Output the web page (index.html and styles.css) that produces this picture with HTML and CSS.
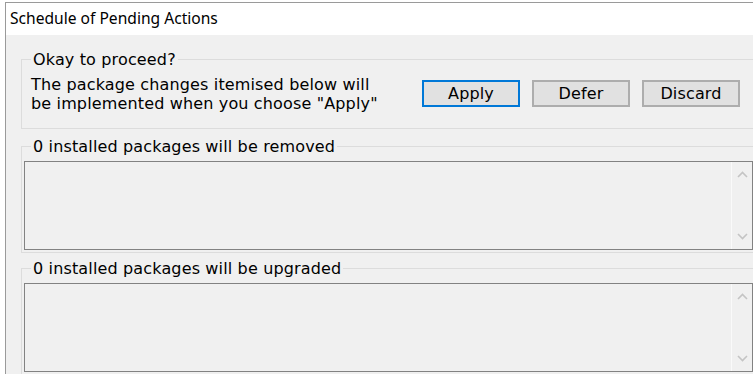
FILE: index.html
```html
<!DOCTYPE html>
<html>
<head>
<meta charset="utf-8">
<link rel="stylesheet" href="styles.css">
</head>
<body>
<div class="desk">
  <div class="window">
    <div class="titlebar">Schedule of Pending Actions</div>
    <div class="client">
      <fieldset class="group group-confirm">
        <legend>Okay to proceed?</legend>
        <div class="confirm-row">
          <p class="confirm-text">The package changes itemised below will<br>be implemented when you choose "Apply"</p>
          <div class="buttons">
            <button class="btn btn-default">Apply</button>
            <button class="btn">Defer</button>
            <button class="btn">Discard</button>
          </div>
        </div>
      </fieldset>
      <fieldset class="group group-list">
        <legend>0 installed packages will be removed</legend>
        <div class="listbox">
          <div class="list-body"></div>
          <div class="vscroll">
            <svg class="arrow" width="11" height="7" viewBox="0 0 11 7"><path d="M1 6 L5.5 1.5 L10 6" fill="none" stroke="#c4c4c4" stroke-width="1.6"/></svg>
            <svg class="arrow" width="11" height="7" viewBox="0 0 11 7"><path d="M1 1 L5.5 5.5 L10 1" fill="none" stroke="#c4c4c4" stroke-width="1.6"/></svg>
          </div>
        </div>
      </fieldset>
      <fieldset class="group group-list group-last">
        <legend>0 installed packages will be upgraded</legend>
        <div class="listbox">
          <div class="list-body"></div>
          <div class="vscroll">
            <svg class="arrow" width="11" height="7" viewBox="0 0 11 7"><path d="M1 6 L5.5 1.5 L10 6" fill="none" stroke="#c4c4c4" stroke-width="1.6"/></svg>
            <svg class="arrow" width="11" height="7" viewBox="0 0 11 7"><path d="M1 1 L5.5 5.5 L10 1" fill="none" stroke="#c4c4c4" stroke-width="1.6"/></svg>
          </div>
        </div>
      </fieldset>
    </div>
  </div>
</div>
</body>
</html>
```
FILE: styles.css
```css
html, body {
  margin: 0;
  padding: 0;
  background: #ffffff;
  overflow: hidden;
  width: 753px;
  height: 374px;
}

.desk {
  padding: 2px 0 0 5px;
}

.window {
  width: 780px;
  border-left: 1px solid #9a9a9a;
  border-top: 1px solid #9a9a9a;
  background: #f0f0f0;
}

.titlebar {
  height: 32px;
  background: #ffffff;
  font-family: "Noto Sans", sans-serif;
  font-size: 15.6px;
  line-height: 31px;
  padding-left: 4px;
  color: #000;
}

.client {
  padding: 15px 0 10px 15px;
  font-family: "DejaVu Sans", sans-serif;
  font-size: 16px;
  letter-spacing: 0.15px;
  color: #000;
}

.group {
  margin: 0;
  width: 735px;
  border: 1px solid #dcdcdc;
  padding: 0;
  min-width: 0;
}

.group legend {
  margin-left: 9px;
  padding: 0 2px;
  line-height: 19px;
  height: 19px;
}

.confirm-row {
  display: flex;
  align-items: flex-start;
  padding: 6px 0 15px 9px;
}

.confirm-text {
  margin: 0;
  line-height: 19px;
  width: 391px;
}

.buttons {
  display: flex;
  gap: 12px;
  margin-top: 5px;
}

.btn {
  width: 98px;
  height: 27px;
  margin: 0;
  padding: 0;
  background: #e1e1e1;
  border: 2px solid #adadad;
  font-family: inherit;
  font-size: 16px;
  letter-spacing: inherit;
  line-height: 22px;
  color: #000;
}

.btn-default {
  border-color: #0078d7;
}

.group-list {
  margin-top: 8px;
  padding-bottom: 2px;
}

.group-last {
  margin-top: 6px;
}

.listbox {
  display: flex;
  margin: 5px 0 0 2px;
  width: 727px;
  height: 87px;
  border: 1px solid #828282;
  background: #f0f0f0;
}

.list-body {
  flex: 1;
}

.vscroll {
  width: 20px;
  border-left: 1px solid #fafafa;
  display: flex;
  flex-direction: column;
  justify-content: space-between;
  align-items: center;
  padding: 9px 0 9px;
}

.arrow {
  display: block;
}
```
